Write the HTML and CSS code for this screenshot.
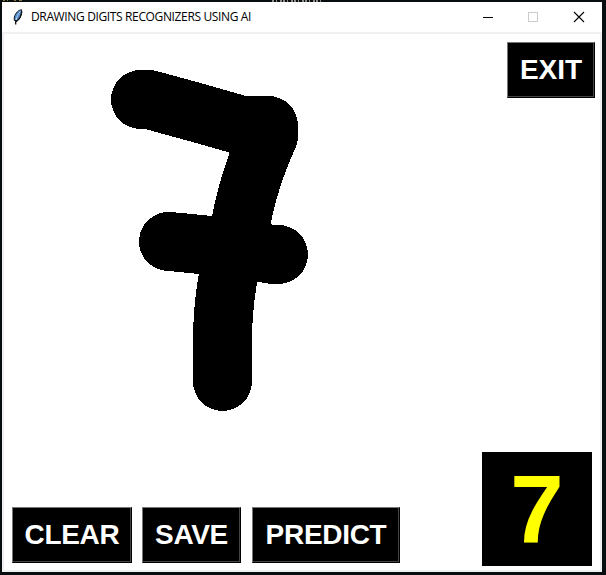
FILE: index.html
```html
<!DOCTYPE html>
<html lang="en">
<head>
<meta charset="utf-8">
<title>DRAWING DIGITS RECOGNIZERS USING AI</title>
<link rel="stylesheet" href="styles.css">
</head>
<body>
<svg class="backdrop" width="606" height="2" viewBox="0 0 606 2">
  <path d="M3 .5H5M7 .5H8M14 .5H16M19 .5H22" stroke="#8a7440"/>
  <path d="M272 1H324" stroke="#8b8b8b" stroke-width="2" stroke-dasharray="2 2 1 3 2 1"/>
</svg>
<main class="window">
  <header class="titlebar">
    <svg class="feather" width="10" height="16" viewBox="0 0 10 16">
      <path d="M8.5 .7C5.5 1 2.5 4 1.3 8L1.2 11.3 3 12.5C6 11.5 8.3 7 8.8 3Z" fill="#4e86c6" stroke="#151b24" stroke-width="1"/>
      <path d="M7.2 2.5C5 5 3.8 8 3 11" fill="none" stroke="#b9dcf5" stroke-width="1"/>
      <path d="M8.7 2.5C8.2 7 6 11 3.2 12.3M2.7 11V15.5" fill="none" stroke="#111" stroke-width="1.3"/>
    </svg>
    <h1 class="title">DRAWING DIGITS RECOGNIZERS USING AI</h1>
    <svg class="controls" width="104" height="12" viewBox="0 0 104 12" shape-rendering="crispEdges">
      <path d="M0 6.5H10" stroke="#000"/>
      <rect x="45.5" y="1.5" width="9" height="9" fill="none" stroke="#ccc"/>
      <path d="M91 1L101 11M101 1L91 11" stroke="#000" stroke-width="1.1" shape-rendering="auto"/>
    </svg>
  </header>
  <section class="canvas">
    <svg class="drawing" width="596" height="536" viewBox="4 34 596 536" shape-rendering="crispEdges">
      <g fill="none" stroke="#000" stroke-width="59" stroke-linecap="round" stroke-linejoin="round">
        <path d="M140.5 99.5L149 99.5L200 113.5L242 125.5L268.5 125.5L268.5 136C256 164 246 194 241.5 220C235 249 222 285 222.5 345L222.5 381.5"/>
        <path d="M168.5 241.5L175 242L210 245.5L240 249L273 254.5L278.5 254.5"/>
      </g>
    </svg>
    <div class="top-row"><button class="btn exit">EXIT</button></div>
    <div class="bottom-row">
      <button class="btn clear">CLEAR</button>
      <button class="btn save">SAVE</button>
      <button class="btn predict">PREDICT</button>
      <output class="result">7</output>
    </div>
  </section>
</main>
</body>
</html>
```
FILE: styles.css
```css
* { box-sizing: border-box; }
body {
  margin: 0;
  width: 606px;
  height: 575px;
  padding: 2px 4px 3px 2px;
  background: #080d10;
  overflow: hidden;
}
.backdrop {
  position: absolute;
  left: 0;
  top: 0;
}
.window {
  width: 600px;
  height: 570px;
  background: #fff;
}
.titlebar {
  height: 30px;
  display: flex;
  align-items: center;
  padding: 0 15px 0 11px;
}
.title {
  margin: 0 auto 0 8px;
  font: 400 12px/16px "Open Sans", "Noto Sans", sans-serif;
  letter-spacing: -0.36px;
  color: #000;
  white-space: nowrap;
}
.canvas {
  position: relative;
  height: 540px;
  border: 2px solid #f0f0f0;
  display: flex;
  flex-direction: column;
  justify-content: space-between;
  padding: 8px 5px 4px 8px;
}
.drawing {
  position: absolute;
  left: 0;
  top: 0;
}
.top-row {
  position: relative;
  display: flex;
  justify-content: flex-end;
}
.bottom-row {
  position: relative;
  display: flex;
  align-items: flex-end;
  padding-right: 3px;
}
.btn {
  height: 56px;
  padding: 0;
  border: 1px solid;
  border-color: #777 #000 #000 #777;
  border-radius: 0;
  background: #000;
  box-shadow: inset -1px -1px #444;
  color: #fff;
  font: 700 28px/52px "Liberation Sans", Arial, sans-serif;
  letter-spacing: -0.3px;
  text-align: center;
}
.bottom-row .btn { margin-bottom: 3px; }
.exit { width: 88px; letter-spacing: 0; }
.clear { width: 120px; }
.save { width: 99px; margin-left: 10px; }
.predict { width: 148px; margin-left: 11px; }
.result {
  width: 110px;
  height: 114px;
  margin-left: auto;
  background: #000;
  color: #ff0;
  font: 700 96px/116px "Liberation Sans", Arial, sans-serif;
  text-align: center;
}
```
